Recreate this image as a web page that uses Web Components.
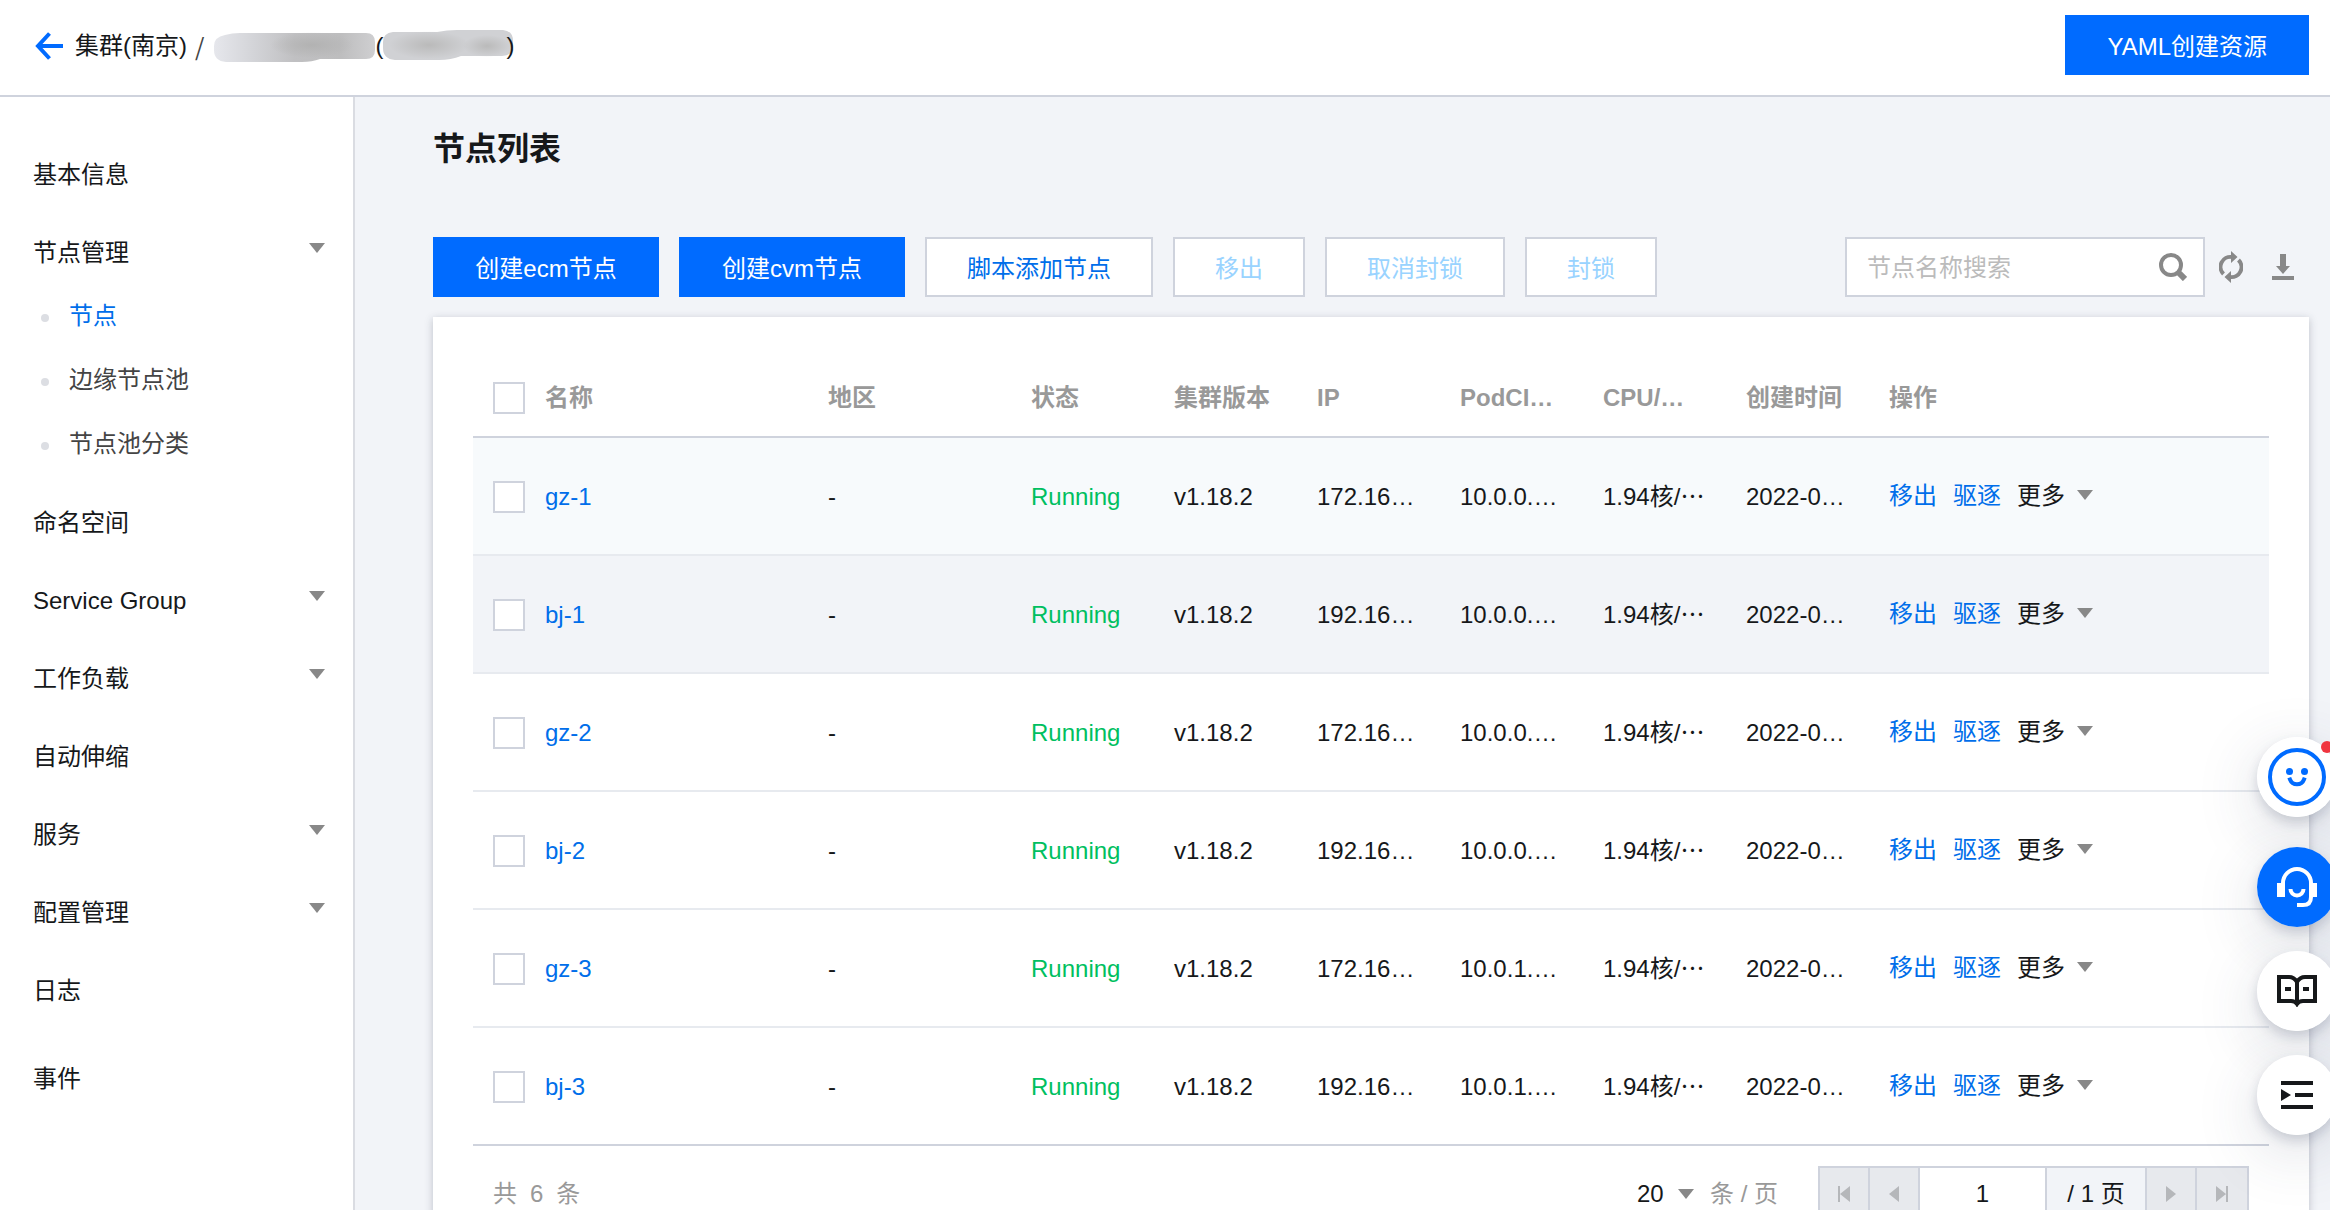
<!DOCTYPE html>
<html lang="zh-CN">
<head>
<meta charset="utf-8">
<title>节点列表</title>
<style>
  :root {
    --blue: #006bff;
    --link: #006eea;
    --line: #cfd3dd;
    --line-soft: #e7eaef;
    --bg: #f2f4f8;
    --muted: #999;
    --icon: #888;
  }
  body {
    margin: 0;
    color: #16181a;
    font: 24px/36px "Liberation Sans", "Noto Sans CJK SC", sans-serif;
  }
</style>
</head>
<body>
<console-app></console-app>

<script>
const base = `
  *, *::before, *::after { box-sizing: border-box; }
  a { color: inherit; text-decoration: none; }
  button, input, select { font: inherit; color: inherit; margin: 0; border-radius: 0; }
  button { cursor: pointer; }
  svg { display: block; flex: none; }
`;

function define(name, html, setup) {
  const tpl = document.createElement('template');
  tpl.innerHTML = html;
  customElements.define(name, class extends HTMLElement {
    connectedCallback() {
      if (this.shadowRoot) return;
      const root = this.attachShadow({ mode: 'open' });
      root.append(tpl.content.cloneNode(true));
      if (setup) setup(this, root);
    }
  });
}

define('tri-down', `
  <style>:host { display: block; flex: none; color: var(--icon); } svg { display: block; }</style>
  <svg width="16" height="10" viewBox="0 0 16 10" aria-hidden="true"><path d="M0 0h16L8 10z" fill="currentColor"/></svg>
`);

define('ui-button', `
  <style>${base}
    :host { display: block; flex: none; }
    button {
      display: block; height: 60px; padding: 4px 40px 0; white-space: nowrap;
      border: 2px solid var(--line); background: #fff; color: var(--link);
    }
    :host([kind=primary]) button { min-width: 226px; background: var(--blue); border-color: var(--blue); color: #fff; }
    button:disabled { color: #99d3ff; cursor: default; }
  </style>
  <button type="button"><slot></slot></button>
`, (host, root) => { root.querySelector('button').disabled = host.hasAttribute('disabled'); });

define('page-header', `
  <style>${base}
    :host { display: flex; justify-content: space-between; align-items: flex-start;
      height: 97px; padding: 15px 21px 0 35px; border-bottom: 2px solid var(--line); background: #fff; }
    nav { display: flex; align-items: center; height: 62px; white-space: nowrap; }
    .back { display: block; margin-right: 12px; }
    .sep { margin: 0 10px 0 8px; color: #444; font-family: "Noto Sans CJK SC", sans-serif; }
    .close { margin-left: -7px; }
  </style>
  <nav aria-label="面包屑">
    <a class="back" href="#" aria-label="返回">
      <svg width="28" height="28" viewBox="0 0 28 28" fill="none" stroke="#006bff" stroke-width="4"><path d="M28 14H3M14.500 1.500L3 14l11.500 12.500"/></svg>
    </a>
    <a href="#">集群(南京)</a>
    <span class="sep">/</span>
    <svg width="161" height="32" viewBox="0 0 161 32" aria-hidden="true">
      <defs>
        <linearGradient id="a"><stop offset="0" stop-color="#e6e7ec"/><stop offset=".22" stop-color="#d5d6da"/><stop offset=".5" stop-color="#c0c0c2"/><stop offset=".78" stop-color="#bdbdbe"/><stop offset="1" stop-color="#cfcfd1"/></linearGradient>
        <radialGradient id="b"><stop offset="0" stop-color="#b2b2b2"/><stop offset="1" stop-color="#b2b2b2" stop-opacity="0"/></radialGradient>
      </defs>
      <path d="M11 5Q18 3 26 3H152Q161 3 161 12V20Q161 29 152 29H106Q98 32 88 32H12Q0 31 0 20V16Q0 7 11 5z" fill="url(#a)"/>
      <ellipse cx="98" cy="15" rx="42" ry="13" fill="url(#b)"/>
    </svg>
    <span>(</span>
    <svg width="130" height="32" viewBox="0 0 130 32" aria-hidden="true">
      <defs>
        <radialGradient id="c"><stop offset="0" stop-color="#bababa"/><stop offset="1" stop-color="#bababa" stop-opacity="0"/></radialGradient>
      </defs>
      <path d="M10 2H54Q64 0 74 0H120Q130 1 130 11V17Q129 26 119 26H78Q68 30 56 30H12Q0 29 0 18V12Q0 3 10 2z" fill="#d0d1d4"/>
      <ellipse cx="46" cy="15" rx="40" ry="14" fill="url(#c)"/>
      <ellipse cx="104" cy="16" rx="24" ry="11" fill="url(#c)"/>
    </svg>
    <span class="close">)</span>
  </nav>
  <ui-button kind="primary">YAML创建资源</ui-button>
`);

define('nav-item', `
  <style>${base}
    :host { display: block; }
    a { display: flex; align-items: center; justify-content: space-between; height: 62px; padding: 2px 28px 0 33px; }
    tri-down { margin-bottom: 10px; }
    :host(:not([expandable])) tri-down { display: none; }
  </style>
  <a href="#"><span><slot></slot></span><tri-down></tri-down></a>
  <slot name="sub"></slot>
`);

define('nav-subitem', `
  <style>${base}
    :host { display: block; color: #444; }
    :host([current]) { color: var(--link); }
    a { display: flex; align-items: center; gap: 20px; height: 64px; padding: 2px 0 0 41px; }
    a::before { content: ""; width: 8px; height: 8px; margin-top: 4px; border-radius: 50%; background: #dcdee3; }
  </style>
  <a href="#"><slot></slot></a>
`);

define('side-nav', `
  <style>${base}
    :host { display: block; flex: none; width: 355px; padding-top: 46px; background: #fff; border-right: 2px solid #dadce2; }
    nav { display: flex; flex-direction: column; gap: 16px; }
    .apart { margin-top: 10px; }
  </style>
  <nav aria-label="集群导航">
    <nav-item>基本信息</nav-item>
    <nav-item expandable>节点管理
      <nav-subitem slot="sub" current>节点</nav-subitem>
      <nav-subitem slot="sub">边缘节点池</nav-subitem>
      <nav-subitem slot="sub">节点池分类</nav-subitem>
    </nav-item>
    <nav-item>命名空间</nav-item>
    <nav-item expandable>Service Group</nav-item>
    <nav-item expandable>工作负载</nav-item>
    <nav-item>自动伸缩</nav-item>
    <nav-item expandable>服务</nav-item>
    <nav-item expandable>配置管理</nav-item>
    <nav-item>日志</nav-item>
    <nav-item class="apart">事件</nav-item>
  </nav>
`);

define('search-box', `
  <style>${base}
    :host { display: flex; align-items: center; width: 360px; height: 60px; background: #fff; border: 2px solid var(--line); padding: 0 16px 0 20px; }
    input { flex: 1; min-width: 0; height: 38px; padding: 2px 0 0; border: 0; outline: 0; background: none; }
    input::placeholder { color: #bbb; opacity: 1; }
    button { padding: 0; border: 0; background: none; }
  </style>
  <input type="text" placeholder="节点名称搜索" aria-label="节点名称搜索">
  <button type="button" aria-label="搜索">
    <svg width="28" height="28" viewBox="0 0 28 28" fill="none" stroke="#888"><circle cx="12" cy="12" r="10" stroke-width="4"/><path d="M19 19l7 7" stroke-width="6"/></svg>
  </button>
`);

define('tool-bar', `
  <style>${base}
    :host { display: flex; justify-content: space-between; }
    .group { display: flex; gap: 20px; }
    .tools { display: flex; align-items: center; }
    .icon { display: flex; align-items: center; justify-content: center; width: 52px; height: 60px; padding: 0; border: 0; background: none; }
  </style>
  <div class="group">
    <ui-button kind="primary">创建ecm节点</ui-button>
    <ui-button kind="primary">创建cvm节点</ui-button>
    <ui-button>脚本添加节点</ui-button>
    <ui-button disabled>移出</ui-button>
    <ui-button disabled>取消封锁</ui-button>
    <ui-button disabled>封锁</ui-button>
  </div>
  <div class="tools">
    <search-box></search-box>
    <button class="icon" type="button" aria-label="刷新">
      <svg width="24" height="32" viewBox="0 0 24 32" fill="none" stroke="#888" stroke-width="4"><path d="M4.500 23A10 10 0 0 1 13 6M19.500 9A10 10 0 0 1 11 26"/><path d="M12 0l6.500 6L12 12zM12 32l-6.500-6L12 20z" fill="#888" stroke="none"/></svg>
    </button>
    <button class="icon" type="button" aria-label="下载">
      <svg width="22" height="26" viewBox="0 0 22 26" fill="#888"><path d="M8 0h6v12h4l-7 8-7-8h4zM0 22h22v4H0z"/></svg>
    </button>
  </div>
`);

define('node-table', `
  <style>${base}
    :host { display: block; }
    table { width: 100%; table-layout: fixed; border-collapse: separate; border-spacing: 0; }
    th, td { padding: 2px 20px 0; text-align: left; vertical-align: middle; white-space: nowrap; }
    th { height: 81px; color: var(--muted); font-weight: 700; border-bottom: 2px solid var(--line); }
    td { height: 118px; border-bottom: 2px solid var(--line-soft); }
    tr:last-child td { border-bottom-color: var(--line); }
    .pick { padding-right: 0; }
    td:last-child { padding-top: 0; }
    .w-pick { width: 52px; } .w-name { width: 283px; } .w-area { width: 203px; } .w-col { width: 143px; }
    tr.tint td { background: #f7fafc; }
    tr.hover td { background: var(--bg); }
    input { display: block; appearance: none; width: 32px; height: 32px; border: 2px solid var(--line); background: #fff; }
    a { color: var(--link); }
    .ok { color: #00bf60; }
    .cjk { font-family: "Noto Sans CJK SC", sans-serif; line-height: 24px; }
    .ops { display: flex; align-items: center; gap: 16px; }
    .more { display: flex; align-items: center; gap: 12px; padding: 0; border: 0; background: none; }
    .more tri-down { margin-bottom: 2px; }
  </style>
  <table>
    <colgroup><col class="w-pick"><col class="w-name"><col class="w-area"><col class="w-col"><col class="w-col"><col class="w-col"><col class="w-col"><col class="w-col"><col class="w-col"><col></colgroup>
    <thead><tr>
      <th class="pick"><input type="checkbox" aria-label="全选"></th>
      <th>名称</th><th>地区</th><th>状态</th><th>集群版本</th><th>IP</th><th>PodCI…</th><th>CPU/…</th><th>创建时间</th><th>操作</th>
    </tr></thead>
    <tbody></tbody>
  </table>
`, (host, root) => {
  const nodes = [
    ['gz-1', '172.16…', '10.0.0.…', 'tint'],
    ['bj-1', '192.16…', '10.0.0.…', 'hover'],
    ['gz-2', '172.16…', '10.0.0.…', ''],
    ['bj-2', '192.16…', '10.0.0.…', ''],
    ['gz-3', '172.16…', '10.0.1.…', ''],
    ['bj-3', '192.16…', '10.0.1.…', '']
  ];
  root.querySelector('tbody').innerHTML = nodes.map(([name, ip, pod, cls]) => `
    <tr class="${cls}">
      <td class="pick"><input type="checkbox" aria-label="选择 ${name}"></td>
      <td><a href="#">${name}</a></td><td>-</td><td class="ok">Running</td><td>v1.18.2</td>
      <td>${ip}</td><td>${pod}</td><td>1.94核/<span class="cjk">…</span></td><td>2022-0…</td>
      <td><div class="ops"><a href="#">移出</a><a href="#">驱逐</a><button class="more" type="button">更多<tri-down></tri-down></button></div></td>
    </tr>`).join('');
});

define('table-pager', `
  <style>${base}
    :host { display: flex; justify-content: space-between; padding: 20px 20px 40px; color: var(--muted); }
    .total, .size, .pager { display: flex; align-items: center; height: 56px; }
    .total { gap: 13px; }
    .right { display: flex; gap: 40px; }
    .size { gap: 16px; }
    .pick { display: flex; align-items: center; gap: 14px; }
    select { appearance: none; padding: 0; border: 0; background: none; color: #16181a; }
    .pager { border: 2px solid var(--line); color: #16181a; }
    .pager > * { height: 52px; border: 0; border-right: 2px solid var(--line); padding: 0; background: var(--bg); }
    .pager > :last-child { border-right: 0; }
    .pager button { display: flex; align-items: center; justify-content: center; width: 50px; background: #e7e9ed; color: #b5b7ba; }
    .pager input { width: 127px; text-align: center; background: #fff; outline: 0; }
    .count { width: 100px; text-align: center; line-height: 52px; }
  </style>
  <div class="total"><span>共</span><span>6</span><span>条</span></div>
  <div class="right">
    <div class="size">
      <label class="pick"><select aria-label="每页条数"><option>20</option></select><tri-down></tri-down></label>
      <span>条 / 页</span>
    </div>
    <div class="pager">
      <button type="button" disabled aria-label="首页"><svg width="12" height="16" viewBox="0 0 12 16" fill="currentColor"><path d="M0 0h2v16H0zM12 0v16L2 8z"/></svg></button>
      <button type="button" disabled aria-label="上一页"><svg width="10" height="16" viewBox="0 0 10 16" fill="currentColor"><path d="M10 0v16L0 8z"/></svg></button>
      <input type="text" value="1" aria-label="页码">
      <span class="count">/ 1 页</span>
      <button type="button" disabled aria-label="下一页"><svg width="10" height="16" viewBox="0 0 10 16" fill="currentColor"><path d="M0 0v16L10 8z"/></svg></button>
      <button type="button" disabled aria-label="末页"><svg width="12" height="16" viewBox="0 0 12 16" fill="currentColor"><path d="M10 0h2v16h-2zM0 0v16L10 8z"/></svg></button>
    </div>
  </div>
`);

define('float-dock', `
  <style>${base}
    :host { position: fixed; right: -7px; top: 737px; display: flex; flex-direction: column; gap: 24px; }
    button {
      position: relative; display: flex; align-items: center; justify-content: center; width: 80px; height: 80px; padding: 0;
      border: 0; border-radius: 50%; background: #fff; color: #16181a;
    }
    button::before {
      content: ""; position: absolute; inset: 0; z-index: -1; border-radius: 50%;
      box-shadow: 0 6px 12px rgba(55, 65, 95, .2), 0 16px 64px rgba(55, 65, 95, .18);
    }
    .face { margin-bottom: 6px; }
    .help { background: var(--blue); color: #fff; }
    .dot { position: absolute; top: 4px; right: 4px; width: 12px; height: 12px; border-radius: 50%; background: #f0353f; }
  </style>
  <button class="face" type="button" aria-label="反馈">
    <svg width="58" height="58" viewBox="0 0 58 58" fill="none" stroke="#006bff" stroke-width="4"><circle cx="29" cy="29" r="27"/><path d="M22 31.500a7.500 7.500 0 0 0 14 0" stroke-linecap="square"/><g fill="#006bff" stroke="none"><circle cx="21.500" cy="23.500" r="3.500"/><circle cx="36.500" cy="23.500" r="3.500"/></g></svg>
    <span class="dot"></span>
  </button>
  <button class="help" type="button" aria-label="在线客服">
    <svg width="40" height="40" viewBox="0 0 40 40" fill="none" stroke="currentColor" stroke-width="4"><path d="M6 28V16a14 14 0 0 1 28 0v14q0 8-8 8h-6"/><path d="M13.500 22a6.500 6.500 0 0 0 13 0"/><path d="M0 16h8v14H0zM32 16h8v14h-8z" fill="currentColor" stroke="none"/></svg>
  </button>
  <button type="button" aria-label="文档">
    <svg width="40" height="32" viewBox="0 0 40 32" fill="none" stroke="currentColor" stroke-width="4"><path d="M20 7q-3-5-8-5H2v24h12q4 0 6 3 2-3 6-3h12V2H28q-5 0-8 5zM20 6v24M8 14h6M26 14h6"/></svg>
  </button>
  <button type="button" aria-label="展开菜单">
    <svg width="32" height="28" viewBox="0 0 32 28" fill="currentColor"><path d="M0 0h32v4H0zM14 12h18v4H14zM0 24h32v4H0zM0 8l10 6-10 6z"/></svg>
  </button>
`);

define('data-card', `
  <style>${base}
    :host { display: block; padding: 40px 40px 0; background: #fff; box-shadow: 0 2px 8px rgba(54, 58, 80, .28); }
  </style>
  <slot></slot>
`);

define('console-app', `
  <style>${base}
    :host { display: flex; flex-direction: column; height: 100vh; overflow: hidden; background: var(--bg); }
    page-header { flex: none; }
    .body { display: flex; flex: 1; min-height: 0; }
    main { flex: 1; min-width: 0; padding: 28px 21px 0 78px; }
    h1 { margin: 0 0 64px; font-size: 32px; line-height: 48px; font-weight: 700; }
    tool-bar { margin-bottom: 20px; }
    float-dock { z-index: 1; }
  </style>
  <page-header></page-header>
  <div class="body">
    <side-nav></side-nav>
    <main>
      <h1>节点列表</h1>
      <tool-bar></tool-bar>
      <data-card>
        <node-table></node-table>
        <table-pager></table-pager>
      </data-card>
    </main>
  </div>
  <float-dock></float-dock>
`);
</script>
</body>
</html>
